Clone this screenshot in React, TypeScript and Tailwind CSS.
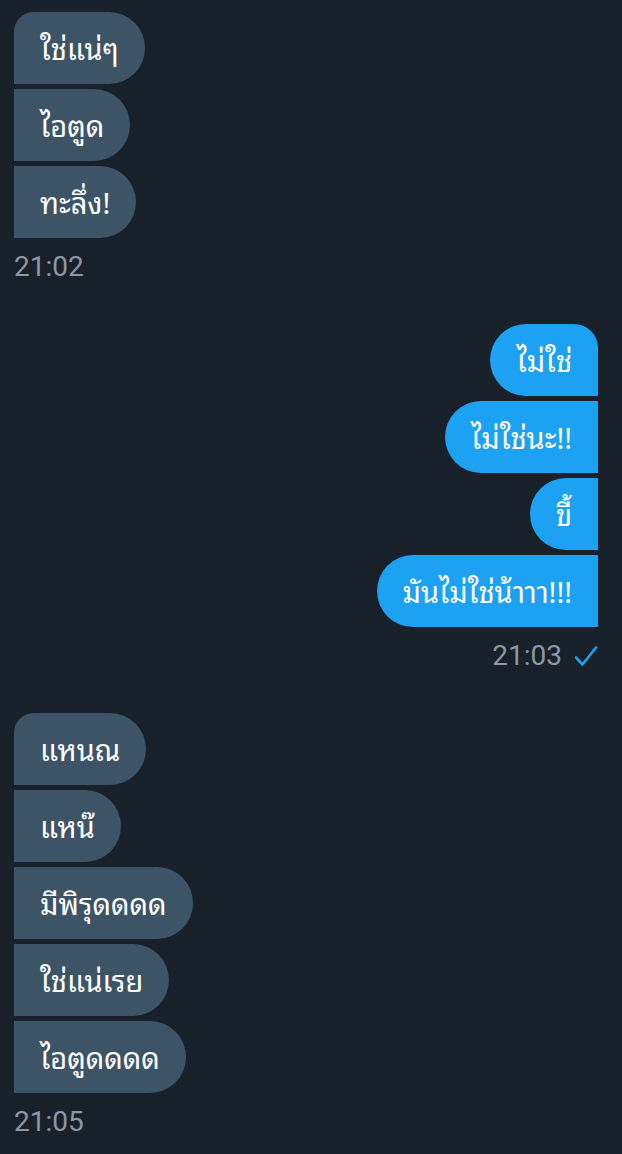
import React from "react";

type Group = {
  side: "left" | "right";
  messages: string[];
  time: string;
  read?: boolean;
};

const groups: Group[] = [
  { side: "left", messages: ["ใช่แน่ๆ", "ไอตูด", "ทะลึ่ง!"], time: "21:02" },
  { side: "right", messages: ["ไม่ใช่", "ไม่ใช่นะ!!", "ขี้", "มันไม่ใช่น้าาา!!!"], time: "21:03", read: true },
  { side: "left", messages: ["แหนณ", "แหน๊", "มีพิรุดดดด", "ใช่แน่เรย", "ไอตูดดดด"], time: "21:05" },
];

const bubbleShape = (side: "left" | "right", index: number) => {
  if (side === "left") {
    return index === 0 ? "rounded-r-[36px] rounded-tl-[20px]" : "rounded-r-[36px]";
  }
  return index === 0 ? "rounded-l-[36px] rounded-tr-[24px]" : "rounded-l-[36px]";
};

const Check = () => (
  <svg width="24" height="22" viewBox="0 0 24 22" fill="none" className="text-[#1da1f2]">
    <path d="M2 12.5 L8.5 19.5 L22 2.5" stroke="currentColor" strokeWidth="2.6" strokeLinecap="round" strokeLinejoin="round" />
  </svg>
);

const MessageGroup = ({ group, first }: { group: Group; first: boolean }) => {
  const isLeft = group.side === "left";
  return (
    <div className={`flex flex-col ${isLeft ? "items-start" : "items-end"} ${first ? "" : "mt-[41px]"}`}>
      <div className={`flex flex-col gap-[5px] ${isLeft ? "items-start" : "items-end"}`}>
        {group.messages.map((msg, i) => (
          <div
            key={i}
            className={`h-[72px] flex items-center px-[26px] text-[29px] text-white ${
              isLeft ? "bg-[#3d5466]" : "bg-[#1da1f2]"
            } ${bubbleShape(group.side, i)}`}
            style={{ fontFamily: '"Noto Sans Thai Looped", Loma, Garuda, Norasi, "Noto Sans Thai", Roboto, sans-serif' }}
          >
            {msg}
          </div>
        ))}
      </div>
      <div className="mt-[13px] h-[32px] flex items-center gap-[12px] text-[28px] leading-[32px] text-[#8b98a5]">
        <span>{group.time}</span>
        {group.read && <Check />}
      </div>
    </div>
  );
};

export default function App() {
  return (
    <div
      className="min-h-[1154px] w-[622px] bg-[#18202a] pt-[12px] pl-[14px] pr-[24px]"
      style={{ fontFamily: 'Roboto, "Noto Sans", sans-serif' }}
    >
      {groups.map((g, i) => (
        <MessageGroup key={i} group={g} first={i === 0} />
      ))}
    </div>
  );
}
